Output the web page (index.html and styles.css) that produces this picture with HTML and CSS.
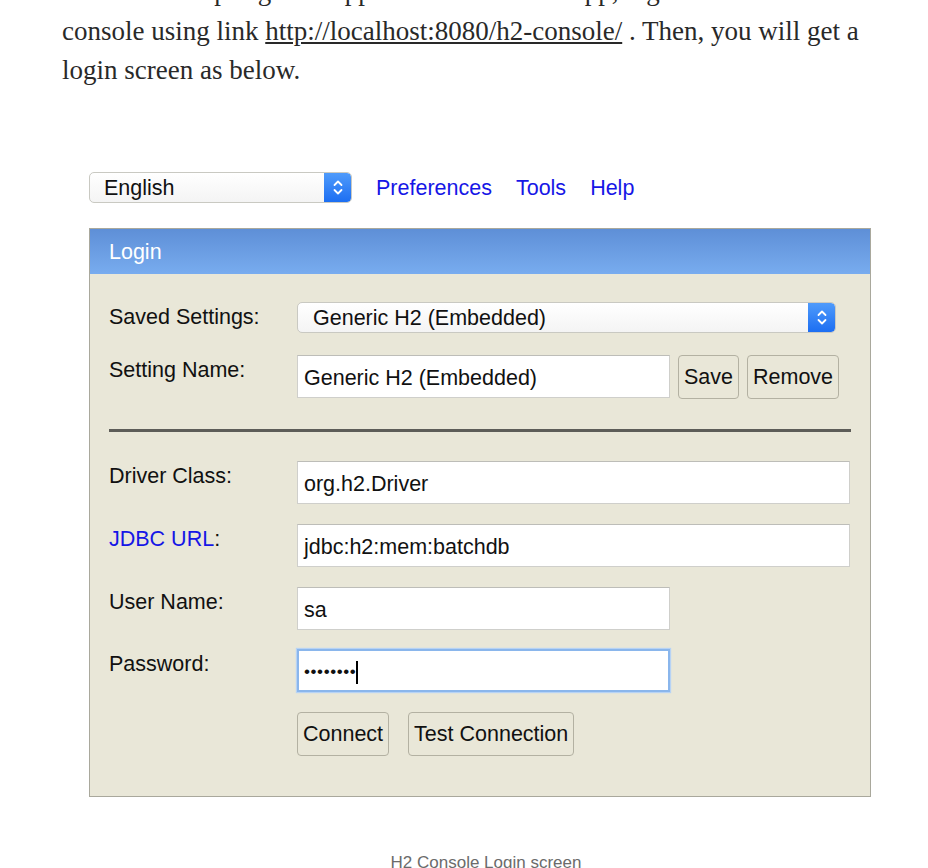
FILE: index.html
```html
<!DOCTYPE html>
<html>
<head>
<meta charset="utf-8">
<link rel="stylesheet" href="styles.css">
</head>
<body>
<article class="article">
  <p class="para">Now run the spring boot application and in the app, login to h2<br>console using link <a href="#" class="link">http://localhost:8080/h2-console/</a> . Then, you will get a login screen as below.</p>
  <figure class="figure">
    <div class="shot">
      <div class="topbar">
        <div class="select lang">
          <span class="select-text">English</span>
          <span class="arrow"><svg width="10" height="17" viewBox="0 0 10 17"><path d="M1.5 6 L5 2.5 L8.5 6 M1.5 11 L5 14.5 L8.5 11" fill="none" stroke="#fff" stroke-width="1.8" stroke-linecap="round" stroke-linejoin="round"/></svg></span>
        </div>
        <nav class="toplinks">
          <a href="#" class="toplink">Preferences</a>
          <a href="#" class="toplink">Tools</a>
          <a href="#" class="toplink">Help</a>
        </nav>
      </div>
      <div class="panel">
        <div class="panel-head">Login</div>
        <div class="panel-body">
          <div class="label l-saved">Saved Settings:</div>
          <div class="select saved">
            <span class="select-text">Generic H2 (Embedded)</span>
            <span class="arrow"><svg width="10" height="17" viewBox="0 0 10 17"><path d="M1.5 6 L5 2.5 L8.5 6 M1.5 11 L5 14.5 L8.5 11" fill="none" stroke="#fff" stroke-width="1.8" stroke-linecap="round" stroke-linejoin="round"/></svg></span>
          </div>

          <div class="label l-name">Setting Name:</div>
          <div class="inline r-name">
            <div class="input short">Generic H2 (Embedded)</div>
            <button class="btn">Save</button>
            <button class="btn">Remove</button>
          </div>

          <div class="rule"></div>

          <div class="label">Driver Class:</div>
          <div class="input">org.h2.Driver</div>

          <div class="label"><span class="blue">JDBC URL</span>:</div>
          <div class="input">jdbc:h2:mem:batchdb</div>

          <div class="label">User Name:</div>
          <div class="input short">sa</div>

          <div class="label r-pass">Password:</div>
          <div class="input short focus r-pass"><span class="dots">••••••••</span><span class="caret"></span></div>

          <div class="label"></div>
          <div class="inline buttons">
            <button class="btn">Connect</button>
            <button class="btn">Test Connection</button>
          </div>
        </div>
      </div>
    </div>
    <figcaption class="caption">H2 Console Login screen</figcaption>
  </figure>
</article>
</body>
</html>
```

FILE: styles.css
```css
html, body {
  margin: 0;
  padding: 0;
  background: #fff;
}
body {
  overflow: hidden;
  height: 868px;
}
.article {
  padding: 0 62px;
}
.para {
  margin: -28px 0 0 0;
  font-family: "Liberation Serif", serif;
  font-size: 27px;
  line-height: 39.5px;
  color: #292929;
  width: 806px;
}
.link {
  color: #292929;
  text-decoration: underline;
}
.figure {
  margin: 81px 0 0 0;
  padding: 0;
}
.shot {
  margin-left: 27px;
  width: 782px;
  font-family: "Liberation Sans", Arial, sans-serif;
  font-size: 21.5px;
  color: #111;
}
.topbar {
  display: flex;
  align-items: center;
  height: 31px;
}
.select {
  display: flex;
  align-items: center;
  justify-content: space-between;
  box-sizing: border-box;
  height: 31px;
  background: linear-gradient(#ffffff, #f4f4f4);
  border: 1px solid #c9c9c2;
  border-radius: 5px;
  overflow: hidden;
}
.select-text {
  padding-left: 14px;
  padding-top: 3px;
  line-height: 1;
}
.arrow {
  width: 27px;
  height: 100%;
  background: linear-gradient(#4f9bfb, #1c6ef2);
  display: flex;
  align-items: center;
  justify-content: center;
  border-radius: 0 4px 4px 0;
}
.lang {
  width: 263px;
}
.toplinks {
  display: flex;
  gap: 24px;
  margin-left: 24px;
  padding-top: 3px;
}
.toplink {
  color: #1616e6;
  text-decoration: none;
}
.panel {
  margin-top: 25px;
  border: 1px solid #a9a89c;
  background: #e9e7d8;
}
.panel-head {
  height: 45px;
  line-height: 47px;
  padding-left: 19px;
  color: #fff;
  background: linear-gradient(#5e8fd7, #78acef);
}
.panel-body {
  display: grid;
  grid-template-columns: 188px 1fr;
  row-gap: 20px;
  padding: 28px 19px 40px 19px;
  align-items: start;
}
.label {
  padding-top: 3px;
  line-height: 24px;
  color: #111;
}
.l-saved {
  padding-top: 3px;
}
.l-name, .r-name {
  margin-top: 2px;
}
.r-pass {
  margin-top: -1px;
}
.saved {
  width: 539px;
}
.saved .select-text {
  padding-left: 15px;
}
.blue {
  color: #1616e6;
}
.inline {
  display: flex;
  gap: 8px;
  align-items: center;
}
.input {
  box-sizing: border-box;
  height: 43px;
  display: flex;
  align-items: center;
  padding: 4px 0 0 6px;
  background: #fff;
  border: 1px solid #cfcfcb;
  border-top-color: #bdbdb8;
  width: 553px;
}
.input.short {
  width: 373px;
}
.input.focus {
  border: 2px solid #8ab6ec;
  box-shadow: 0 0 1px 1px #b7d3f5;
  padding-left: 5px;
}
.dots {
  font-size: 17px;
  letter-spacing: 0.6px;
  color: #111;
}
.caret {
  display: inline-block;
  width: 2px;
  height: 23px;
  background: #000;
  margin-left: 0;
}
.btn {
  font-family: "Liberation Sans", Arial, sans-serif;
  font-size: 21.5px;
  color: #111;
  height: 44px;
  padding: 2px 5px 0 5px;
  background: #e9e7d8;
  border: 1.5px solid #b3b1a2;
  border-radius: 4px;
}
.rule {
  grid-column: 1 / -1;
  height: 3px;
  background: #5d5d58;
  margin: 10px 0 9px 0;
}
.buttons {
  gap: 19px;
}
.caption {
  margin-top: 56px;
  text-align: center;
  font-family: "Liberation Sans", Arial, sans-serif;
  font-size: 17px;
  color: #6b6b6b;
  padding-left: 44px;
}
```
